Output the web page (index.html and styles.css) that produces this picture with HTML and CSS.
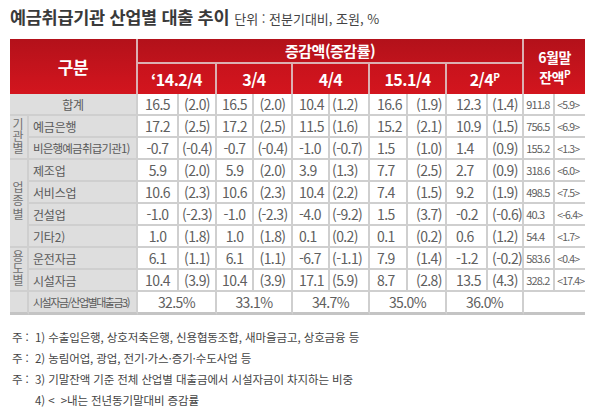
FILE: index.html
```html
<!DOCTYPE html>
<html lang="ko">
<head>
<meta charset="utf-8">
<link rel="stylesheet" href="styles.css">
</head>
<body>
<div class="title"><h1>예금취급기관 산업별 대출 추이</h1><span class="unit">단위 : 전분기대비, 조원, %</span></div>
<table class="tbl">
<colgroup>
<col style="width:19px"><col style="width:109px">
<col style="width:41px"><col style="width:38px">
<col style="width:37px"><col style="width:39px">
<col style="width:37px"><col style="width:40px">
<col style="width:38px"><col style="width:39px">
<col style="width:41px"><col style="width:36px">
<col style="width:31px"><col style="width:30px">
</colgroup>
<thead>
<tr class="h1">
<th rowspan="2" colspan="2" class="span gubun">구분</th>
<th colspan="10" class="top">증감액(증감률)</th>
<th rowspan="2" colspan="2" class="span last bal">6월말<br>잔액<sup>P</sup></th>
</tr>
<tr class="h2">
<th colspan="2">‘14.2/4</th>
<th colspan="2">3/4</th>
<th colspan="2">4/4</th>
<th colspan="2">15.1/4</th>
<th colspan="2">2/4<sup>P</sup></th>
</tr>
</thead>
<tbody>
<tr>
<td colspan="2" class="lab ctr">합계</td>
<td class="n">16.5</td><td class="n">(2.0)</td><td class="n">16.5</td><td class="n">(2.0)</td>
<td class="a">10.4</td><td class="b">(1.2)</td><td class="c">16.6</td><td class="d">(1.9)</td>
<td class="e">12.3</td><td class="f">(1.4)</td><td class="g">911.8</td><td class="h">&lt;5.9&gt;</td>
</tr>
<tr>
<td rowspan="2" class="cat"><span class="vt">기관별</span></td>
<td class="lab">예금은행</td>
<td class="n">17.2</td><td class="n">(2.5)</td><td class="n">17.2</td><td class="n">(2.5)</td>
<td class="a">11.5</td><td class="b">(1.6)</td><td class="c">15.2</td><td class="d">(2.1)</td>
<td class="e">10.9</td><td class="f">(1.5)</td><td class="g">756.5</td><td class="h">&lt;6.9&gt;</td>
</tr>
<tr>
<td class="lab tight">비은행예금취급기관1)</td>
<td class="n">-0.7</td><td class="n">(-0.4)</td><td class="n">-0.7</td><td class="n">(-0.4)</td>
<td class="a">-1.0</td><td class="b">(-0.7)</td><td class="c">1.5</td><td class="d">(1.0)</td>
<td class="e">1.4</td><td class="f">(0.9)</td><td class="g">155.2</td><td class="h">&lt;1.3&gt;</td>
</tr>
<tr>
<td rowspan="4" class="cat"><span class="vt wide">업종별</span></td>
<td class="lab">제조업</td>
<td class="n">5.9</td><td class="n">(2.0)</td><td class="n">5.9</td><td class="n">(2.0)</td>
<td class="a">3.9</td><td class="b">(1.3)</td><td class="c">7.7</td><td class="d">(2.5)</td>
<td class="e">2.7</td><td class="f">(0.9)</td><td class="g">318.6</td><td class="h">&lt;6.0&gt;</td>
</tr>
<tr>
<td class="lab">서비스업</td>
<td class="n">10.6</td><td class="n">(2.3)</td><td class="n">10.6</td><td class="n">(2.3)</td>
<td class="a">10.4</td><td class="b">(2.2)</td><td class="c">7.4</td><td class="d">(1.5)</td>
<td class="e">9.2</td><td class="f">(1.9)</td><td class="g">498.5</td><td class="h">&lt;7.5&gt;</td>
</tr>
<tr>
<td class="lab">건설업</td>
<td class="n">-1.0</td><td class="n">(-2.3)</td><td class="n">-1.0</td><td class="n">(-2.3)</td>
<td class="a">-4.0</td><td class="b">(-9.2)</td><td class="c">1.5</td><td class="d">(3.7)</td>
<td class="e">-0.2</td><td class="f">(-0.6)</td><td class="g">40.3</td><td class="h">&lt;-6.4&gt;</td>
</tr>
<tr>
<td class="lab">기타2)</td>
<td class="n">1.0</td><td class="n">(1.8)</td><td class="n">1.0</td><td class="n">(1.8)</td>
<td class="a">0.1</td><td class="b">(0.2)</td><td class="c">0.1</td><td class="d">(0.2)</td>
<td class="e">0.6</td><td class="f">(1.2)</td><td class="g">54.4</td><td class="h">&lt;1.7&gt;</td>
</tr>
<tr>
<td rowspan="2" class="cat"><span class="vt">용도별</span></td>
<td class="lab">운전자금</td>
<td class="n">6.1</td><td class="n">(1.1)</td><td class="n">6.1</td><td class="n">(1.1)</td>
<td class="a">-6.7</td><td class="b">(-1.1)</td><td class="c">7.9</td><td class="d">(1.4)</td>
<td class="e">-1.2</td><td class="f">(-0.2)</td><td class="g">583.6</td><td class="h">&lt;0.4&gt;</td>
</tr>
<tr>
<td class="lab">시설자금</td>
<td class="n">10.4</td><td class="n">(3.9)</td><td class="n">10.4</td><td class="n">(3.9)</td>
<td class="a">17.1</td><td class="b">(5.9)</td><td class="c">8.7</td><td class="d">(2.8)</td>
<td class="e">13.5</td><td class="f">(4.3)</td><td class="g">328.2</td><td class="h">&lt;17.4&gt;</td>
</tr>
<tr class="lastrow">
<td class="cat"></td>
<td class="lab tighter">시설자금/산업별대출금3)</td>
<td colspan="2" class="n pct">32.5%</td>
<td colspan="2" class="n pct">33.1%</td>
<td colspan="2" class="n pct">34.7%</td>
<td colspan="2" class="n pct">35.0%</td>
<td colspan="2" class="n pct">36.0%</td>
<td colspan="2" class="n end"></td>
</tr>
</tbody>
</table>
<div class="notes">
<div class="note"><span class="mark">주 :</span><span>1) 수출입은행, 상호저축은행, 신용협동조합, 새마을금고, 상호금융 등</span></div>
<div class="note"><span class="mark">주 :</span><span>2) 농림어업, 광업, 전기·가스·증기·수도사업 등</span></div>
<div class="note"><span class="mark">주 :</span><span>3) 기말잔액 기준 전체 산업별 대출금에서 시설자금이 차지하는 비중</span></div>
<div class="note"><span class="mark"></span><span>4) &lt; &nbsp;&gt;내는 전년동기말대비 증감률</span></div>
</div>
</body>
</html>
```
FILE: styles.css
```css
* { box-sizing: border-box; }
body {
  margin: 0;
  background: #ffffff;
  font-family: "Noto Sans CJK KR", "Noto Sans", sans-serif;
  color: #555555;
}
.title {
  display: flex;
  align-items: baseline;
  gap: 5px;
  height: 39px;
  padding: 5px 0 0 10px;
  line-height: 24px;
}
.title h1 {
  margin: 0;
  font-size: 17.5px;
  font-weight: 700;
  letter-spacing: -0.3px;
  color: #3a3a3a;
}
.unit {
  font-size: 13px;
  color: #444444;
  letter-spacing: 0;
}
.tbl {
  margin-left: 10px;
  width: 575px;
  table-layout: fixed;
  border-collapse: separate;
  border-spacing: 0;
}
.tbl th {
  color: #ffffff;
  font-weight: 700;
  padding: 0;
  text-align: center;
  border-right: 2px solid #dcb0b2;
  letter-spacing: -0.5px;
}
.h1 { height: 25px; }
.h2 { height: 30px; }
.h1 th.top {
  background: linear-gradient(#b3111a, #bf131c);
  border-bottom: 2px solid #dcb0b2;
  font-size: 15px;
  line-height: 20px;
}
.h2 th {
  background: linear-gradient(#c8131c, #d3151e);
  font-size: 16px;
  line-height: 22px;
}
.tbl th.span {
  background: linear-gradient(#b3111a 0%, #c2131c 45%, #d3151e 100%);
}
.gubun { font-size: 17px; }
.tbl th.last { border-right: none; }
.bal {
  font-size: 14px;
  line-height: 20px;
  padding-top: 4px;
}
.tbl th sup {
  font-size: 10px;
  line-height: 0;
  vertical-align: 5px;
}
.tbl td {
  padding: 0;
  height: 22px;
  border-right: 2px solid #cfcfcf;
  border-bottom: 2px solid #cfcfcf;
  font-size: 14px;
  letter-spacing: -0.6px;
  color: #606060;
  white-space: nowrap;
  overflow: hidden;
  line-height: 19px;
}
.tbl td.lab {
  background: #dedede;
  font-size: 12px;
  letter-spacing: -0.2px;
  padding-left: 4px;
  color: #5a5a5a;
}
.tbl td.ctr { text-align: center; padding-left: 0; }
.tbl td.tight { letter-spacing: -0.8px; font-size: 11.5px; }
.tbl td.tighter { letter-spacing: -1.5px; font-size: 11px; }
.tbl td.cat {
  background: #dedede;
  text-align: center;
  font-size: 12px;
  color: #707070;
  letter-spacing: 0;
  line-height: 17px;
}
.vt {
  display: inline-block;
  writing-mode: vertical-rl;
  text-orientation: upright;
  letter-spacing: 0;
  margin-left: -1px;
}
.vt.wide { letter-spacing: 1.5px; }
.n { text-align: center; }
.a { padding-left: 6px !important; }
.b { padding-left: 2px !important; }
.c { padding-left: 7px !important; }
.d { padding-left: 8px !important; }
.e { padding-left: 9px !important; }
.f { padding-left: 4px !important; }
.tbl td.g {
  font-size: 11px;
  letter-spacing: -0.8px;
  padding-left: 2px;
}
.tbl td.h {
  font-size: 10.5px;
  letter-spacing: -0.8px;
  padding-left: 2px;
  border-right: none;
}
.tbl td.end { border-right: none; }
.lastrow td {
  height: 23px;
  border-bottom: 3px solid #c4c4c4 !important;
}
.notes {
  padding: 12px 0 0 12px;
  font-size: 11.5px;
  letter-spacing: -0.1px;
  color: #444444;
}
.note {
  display: flex;
  height: 21px;
  line-height: 21px;
}
.mark {
  width: 23px;
  flex: none;
}
```
